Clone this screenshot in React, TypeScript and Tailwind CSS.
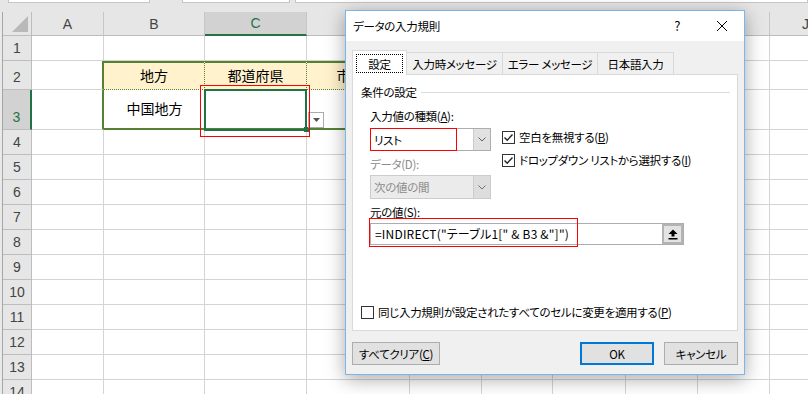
import React from 'react';

type Col = { k: string; w: string };
const COLS: Col[] = [
  { k: 'A', w: 'w-[72px]' },
  { k: 'B', w: 'w-[101px]' },
  { k: 'C', w: 'w-[102px]' },
  { k: 'D', w: 'w-[103px]' },
  { k: 'E', w: 'w-[72px]' },
  { k: 'F', w: 'w-[71px]' },
  { k: 'G', w: 'w-[73px]' },
  { k: 'H', w: 'w-[72px]' },
  { k: 'I', w: 'w-[72px]' },
  { k: 'J', w: 'w-[72px]' },
];

type Row = { n: number; h: string };
const ROWS: Row[] = [
  { n: 1, h: 'h-[25px]' },
  { n: 2, h: 'h-[29px]' },
  { n: 3, h: 'h-[40px]' },
  { n: 4, h: 'h-[25px]' },
  { n: 5, h: 'h-[25px]' },
  { n: 6, h: 'h-[25px]' },
  { n: 7, h: 'h-[25px]' },
  { n: 8, h: 'h-[25px]' },
  { n: 9, h: 'h-[25px]' },
  { n: 10, h: 'h-[25px]' },
  { n: 11, h: 'h-[25px]' },
  { n: 12, h: 'h-[25px]' },
  { n: 13, h: 'h-[25px]' },
  { n: 14, h: 'h-[25px]' },
];

const TEXT: Record<string, string> = {
  B2: '地方',
  C2: '都道府県',
  D2: '市町村',
  B3: '中国地方',
};

function cellBorders(n: number, k: string): string {
  let r = 'border-r border-r-[#D4D4D4]';
  let b = 'border-b border-b-[#D4D4D4]';
  let t = '';
  let bg = 'bg-white';
  const tb = k === 'B' || k === 'C' || k === 'D';
  if (k === 'A' && (n === 2 || n === 3)) r = 'border-r-2 border-r-[#548235]';
  if (tb && n === 2) {
    t = 'border-t-2 border-t-[#548235]';
    bg = 'bg-[#FFF2CC]';
    b = 'border-b border-b-[#548235] [border-bottom-style:dotted]!';
    r = k === 'D' ? 'border-r-2 border-r-[#548235]' : 'border-r border-r-[#548235] [border-right-style:dotted]!';
  }
  if (tb && n === 3) {
    b = 'border-b-2 border-b-[#548235]';
    r = k === 'D' ? 'border-r-2 border-r-[#548235]' : '';
  }
  return [r, b, t, bg].join(' ');
}

function Chevron({ color }: { color: string }) {
  return (
    <svg width="8" height="5" viewBox="0 0 8 5">
      <path d="M0.5 0.5 L4 4 L7.5 0.5" fill="none" stroke={color} strokeWidth="1" />
    </svg>
  );
}

function CheckBox({ checked }: { checked: boolean }) {
  return (
    <div className="w-[13px] h-[13px] border border-[#333333] bg-white flex items-center justify-center shrink-0">
      {checked && (
        <svg width="11" height="11" viewBox="0 0 11 11">
          <path d="M1.5 5.5 L4.2 8.2 L9.5 2.5" fill="none" stroke="#222222" strokeWidth="1.4" />
        </svg>
      )}
    </div>
  );
}

function Sheet() {
  return (
    <div className="flex flex-col w-[808px] font-['Liberation_Sans','Noto_Sans_CJK_JP',sans-serif]">
      <div className="h-[12px] bg-[#E6E6E6] flex items-start shrink-0">
        <div className="ml-[8px] w-[142px] h-[3px] bg-white border-x border-b border-[#C6C6C6]" />
        <div className="ml-[32px] w-[108px] h-[3px] bg-white border-x border-b border-[#C6C6C6]" />
        <div className="ml-[5px] w-[513px] h-[3px] bg-white border-x border-b border-[#C6C6C6]" />
      </div>
      <div className="flex h-[24px] shrink-0">
        <div className="w-[3px] shrink-0 bg-[#E9E9E9] border-r border-[#A6A6A6]" />
        <div className="w-[29px] shrink-0 bg-[#E6E6E6] border-r border-b border-[#BDBDBD] flex items-end justify-end pr-[3px] pb-[3px]">
          <svg width="16" height="16" viewBox="0 0 16 16">
            <polygon points="16,0 16,16 0,16" fill="#B9B9B9" />
          </svg>
        </div>
        {COLS.map((c) => (
          <div
            key={c.k}
            className={`${c.w} shrink-0 flex items-center justify-center text-[14px] leading-[16px] border-r border-r-[#C6C6C6] ${
              c.k === 'C'
                ? 'bg-[#D2D2D2] text-[#217346] border-b-2 border-b-[#217346]'
                : 'bg-[#E6E6E6] text-[#444444] border-b border-b-[#BDBDBD]'
            }`}
          >
            {c.k}
          </div>
        ))}
      </div>
      {ROWS.map((r) => (
        <div key={r.n} className={`flex ${r.h} shrink-0`}>
          <div className="w-[3px] shrink-0 bg-[#E9E9E9] border-r border-[#A6A6A6]" />
          <div
            className={`w-[29px] shrink-0 flex items-end justify-center pb-[4px] text-[14px] leading-[16px] border-b border-b-[#BDBDBD] ${
              r.n === 3
                ? 'bg-[#D2D2D2] text-[#217346] border-r-2 border-r-[#217346]'
                : 'bg-[#E6E6E6] text-[#444444] border-r border-r-[#BDBDBD]'
            }`}
          >
            {r.n}
          </div>
          {COLS.map((c) => (
            <div
              key={c.k}
              className={`${c.w} shrink-0 flex items-center justify-center text-[14px] leading-[16px] text-black whitespace-nowrap ${cellBorders(r.n, c.k)}`}
            >
              {TEXT[`${c.k}${r.n}`] ?? ''}
            </div>
          ))}
        </div>
      ))}
    </div>
  );
}

function Dialog() {
  return (
    <div className="absolute left-[345px] top-[10px] w-[400px] h-[365px] border border-[#7AB6EC] bg-[#F0F0F0] shadow-[0_4px_18px_rgba(0,0,0,0.35)] flex flex-col font-['Noto_Sans_CJK_JP',sans-serif] [font-feature-settings:'palt'] text-[11.5px] tracking-[-0.3px] leading-[16px] text-black whitespace-nowrap">
      <div className="h-[30px] shrink-0 bg-white flex items-center pl-[7px] pr-[17px]">
        <span>データの入力規則</span>
        <span className="ml-auto text-[13px]">?</span>
        <svg className="ml-[37px]" width="10" height="10" viewBox="0 0 10 10">
          <path d="M0 0 L10 10 M10 0 L0 10" stroke="#000" strokeWidth="1" />
        </svg>
      </div>
      <div className="flex-1 flex flex-col px-[6px] pt-[9px]">
        <div className="flex items-end h-[24px] relative z-10">
          <div className="w-[55px] h-[25px] -mb-px bg-white border border-b-0 border-[#D9D9D9] flex items-start justify-center pt-[3px]">
            <div className="w-[47px] h-[19px] border border-dotted border-black flex items-center justify-center">設定</div>
          </div>
          <div className="w-[96px] h-[22px] border-t border-r border-[#D9D9D9] bg-[#F0F0F0] flex items-center justify-center">入力時メッセージ</div>
          <div className="w-[95px] h-[22px] border-t border-r border-[#D9D9D9] bg-[#F0F0F0] flex items-center justify-center">エラー メッセージ</div>
          <div className="w-[76px] h-[22px] border-t border-r border-[#D9D9D9] bg-[#F0F0F0] flex items-center justify-center">日本語入力</div>
        </div>
        <div className="h-[257px] border border-[#D9D9D9] bg-white flex flex-col">
          <div className="mt-[9px] h-[16px] flex items-center pl-[8px] pr-[7px]">
            <span>条件の設定</span>
            <div className="ml-[4px] flex-1 h-px bg-[#DCDCDC]" />
          </div>
          <div className="mt-[8px] flex pl-[17px]">
            <div className="w-[121px] flex flex-col">
              <div className="h-[16px]">
                入力値の種類(<span className="underline">A</span>):
              </div>
              <div className="mt-[4px] relative h-[23px] flex border border-[#ABADB3] bg-white">
                <div className="flex-1 flex items-center pl-[3px]">リスト</div>
                <div className="w-[17px] bg-[#E1E1E1] border-l border-[#CCCCCC] flex items-center justify-center">
                  <Chevron color="#606060" />
                </div>
                <div className="absolute -left-px -top-px w-[87px] h-[23px] border border-[#FF0000]" />
              </div>
              <div className="mt-[5px] h-[16px] text-[#8C8C8C]">データ(D):</div>
              <div className="mt-[3px] h-[24px] flex border border-[#CCCCCC] bg-[#EBEBEB]">
                <div className="flex-1 flex items-center pl-[3px] text-[#8C8C8C]">次の値の間</div>
                <div className="w-[17px] bg-[#DDDDDD] border-l border-[#CCCCCC] flex items-center justify-center">
                  <Chevron color="#707070" />
                </div>
              </div>
            </div>
            <div className="ml-[11px] flex flex-col pt-[21px] gap-[7px]">
              <div className="h-[16px] flex items-center gap-[4px]">
                <CheckBox checked />
                <span>
                  空白を無視する(<span className="underline">B</span>)
                </span>
              </div>
              <div className="h-[16px] flex items-center gap-[4px]">
                <CheckBox checked />
                <span>
                  ドロップダウン リストから選択する(<span className="underline">I</span>)
                </span>
              </div>
            </div>
          </div>
          <div className="mt-[5px] h-[16px] pl-[17px]">
            元の値(<span className="underline">S</span>):
          </div>
          <div className="mt-[3px] ml-[17px] w-[314px] h-[22px] relative flex border border-[#ABADB3] bg-white">
            <div className="flex-1 flex items-center pl-[4px] text-[12px] tracking-[0.2px]">=INDIRECT("テーブル1[" &amp; B3 &amp;"]")</div>
            <div className="w-[21px] border-2 border-[#B4B4B4] bg-[#E3E3E3] flex items-center justify-center">
              <svg width="10" height="11" viewBox="0 0 10 11">
                <polygon points="5,0.5 9.5,5 6.5,5 6.5,7.5 3.5,7.5 3.5,5 0.5,5" fill="#000" />
                <rect x="0.5" y="9" width="9" height="1.5" fill="#000" />
              </svg>
            </div>
            <div className="absolute -left-[2px] -top-[6px] w-[209px] h-[29px] border border-[#FF0000]" />
          </div>
          <div className="mt-auto mb-[10px] h-[16px] flex items-center gap-[4px] pl-[8px]">
            <CheckBox checked={false} />
            <span>
              同じ入力規則が設定されたすべてのセルに変更を適用する(<span className="underline">P</span>)
            </span>
          </div>
        </div>
        <div className="mt-[11px] flex h-[23px]">
          <div className="w-[88px] h-[23px] border border-[#ADADAD] bg-[#E1E1E1] flex items-center justify-center">
            すべてクリア(<span className="underline">C</span>)
          </div>
          <div className="ml-auto w-[74px] h-[23px] border-2 border-[#0078D7] bg-[#E1E1E1] flex items-center justify-center">OK</div>
          <div className="ml-[10px] w-[74px] h-[23px] border border-[#ADADAD] bg-[#E1E1E1] flex items-center justify-center">キャンセル</div>
        </div>
      </div>
    </div>
  );
}

export default function App() {
  return (
    <div className="relative w-[808px] h-[394px] overflow-hidden bg-white">
      <Sheet />
      <div className="absolute left-[204px] top-[89px] w-[103px] h-[42px] border-2 border-[#217346]" />
      <div className="absolute left-[304px] top-[127px] w-[5px] h-[5px] bg-[#217346]" />
      <div className="absolute left-[308px] top-[112px] w-[16px] h-[16px] border border-[#ABABAB] bg-white flex items-center justify-center">
        <svg width="7" height="4" viewBox="0 0 7 4">
          <polygon points="0,0 7,0 3.5,4" fill="#555555" />
        </svg>
      </div>
      <div className="absolute left-[200px] top-[85px] w-[110px] h-[52px] border border-[#FF0000]" />
      <Dialog />
    </div>
  );
}
